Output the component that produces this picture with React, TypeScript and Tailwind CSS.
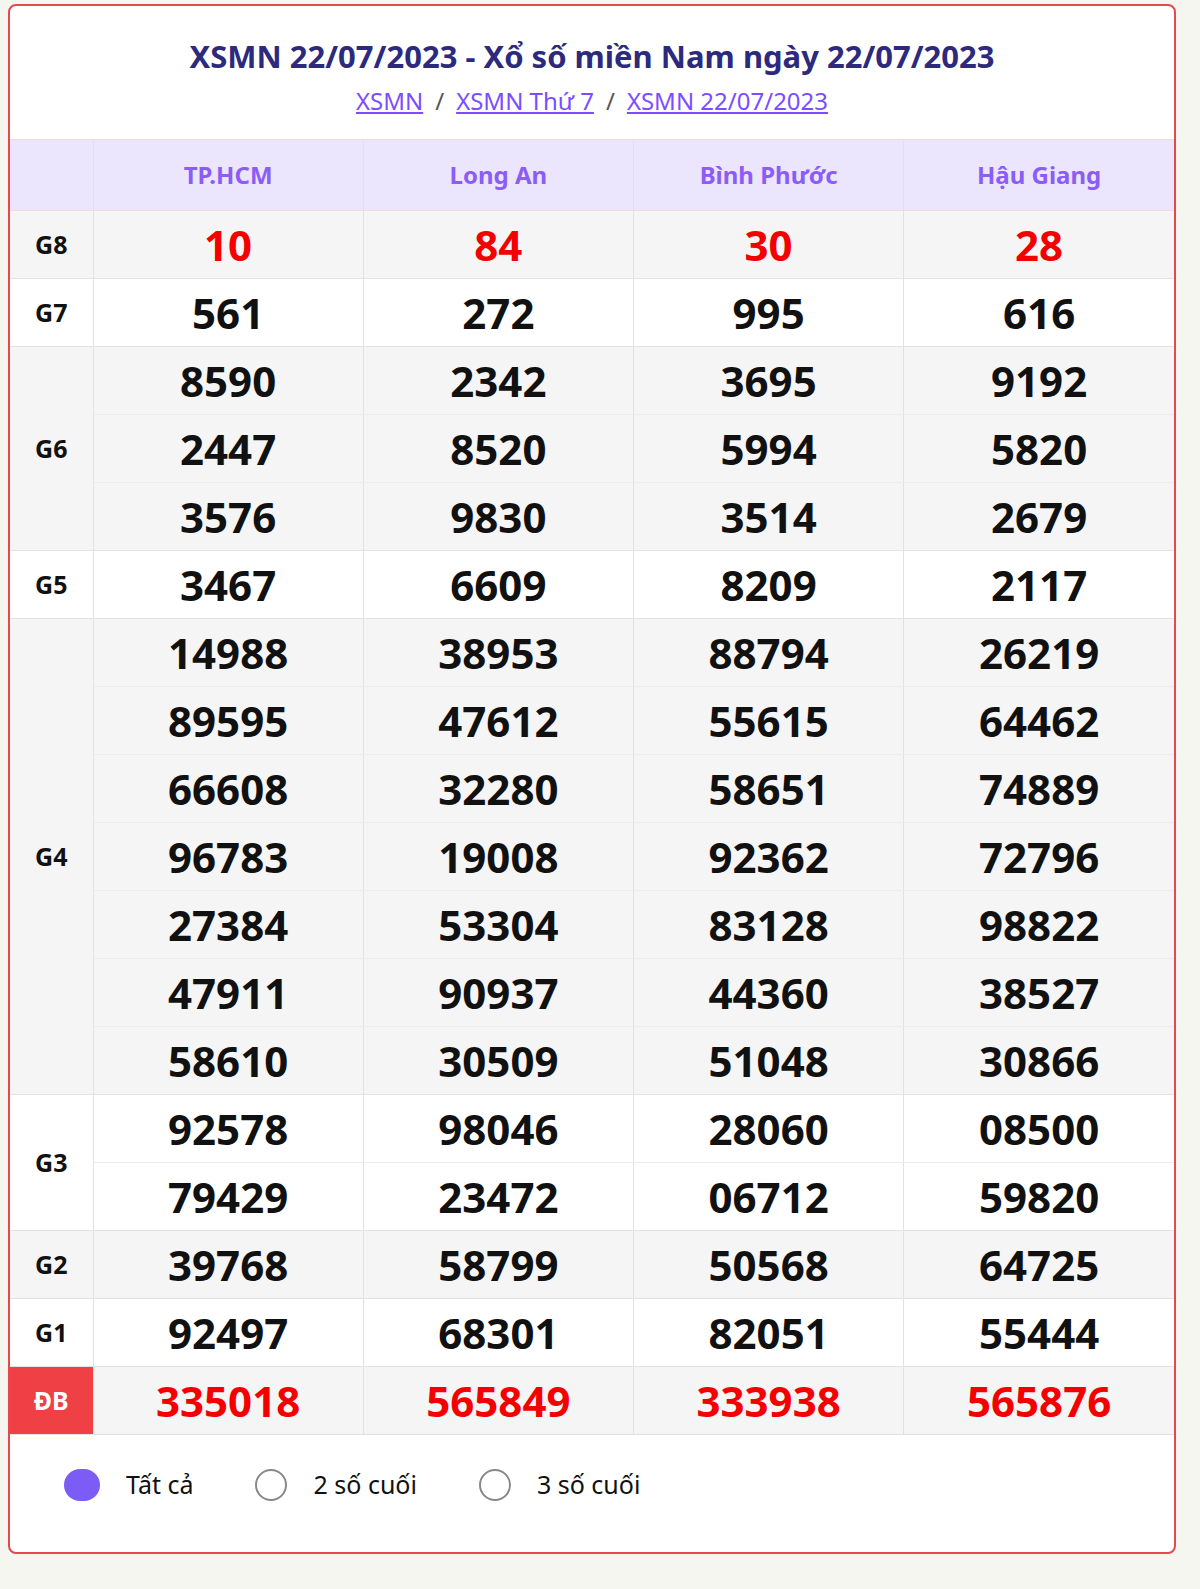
import React from "react";

const cols = ["TP.HCM", "Long An", "Bình Phước", "Hậu Giang"];
const groups: { g: string; rows: string[][]; bg: string; red?: boolean }[] = [
  { g: "G8", bg: "bg-[#f5f5f5]", red: true, rows: [["10", "84", "30", "28"]] },
  { g: "G7", bg: "bg-white", rows: [["561", "272", "995", "616"]] },
  { g: "G6", bg: "bg-[#f5f5f5]", rows: [["8590", "2342", "3695", "9192"], ["2447", "8520", "5994", "5820"], ["3576", "9830", "3514", "2679"]] },
  { g: "G5", bg: "bg-white", rows: [["3467", "6609", "8209", "2117"]] },
  { g: "G4", bg: "bg-[#f5f5f5]", rows: [
    ["14988", "38953", "88794", "26219"], ["89595", "47612", "55615", "64462"], ["66608", "32280", "58651", "74889"],
    ["96783", "19008", "92362", "72796"], ["27384", "53304", "83128", "98822"], ["47911", "90937", "44360", "38527"],
    ["58610", "30509", "51048", "30866"]] },
  { g: "G3", bg: "bg-white", rows: [["92578", "98046", "28060", "08500"], ["79429", "23472", "06712", "59820"]] },
  { g: "G2", bg: "bg-[#f5f5f5]", rows: [["39768", "58799", "50568", "64725"]] },
  { g: "G1", bg: "bg-white", rows: [["92497", "68301", "82051", "55444"]] },
  { g: "ĐB", bg: "bg-[#f5f5f5]", red: true, rows: [["335018", "565849", "333938", "565876"]] },
];

export default function App() {
  return (
    <div className="h-[1589px] w-[1200px] overflow-hidden box-border bg-[#f6f6f1] pt-[4px] px-[8px] font-[family-name:'Liberation_Sans',Arial,sans-serif]">
      <div className="w-[1168px] h-[1550px] bg-white border-2 border-[#e5484d] rounded-[8px] overflow-hidden">
        <div className="h-[133px] flex flex-col items-center pt-[30px]">
          <h1 className="text-[31px] font-bold text-[#2d2a7e] leading-[40px]">XSMN 22/07/2023 - Xổ số miền Nam ngày 22/07/2023</h1>
          <div className="mt-[10px] text-[24px] text-[#7c4dff] flex gap-[12px] leading-[30px]">
            <span className="underline">XSMN </span><span className="text-[#555]">/</span>
            <span className="underline">XSMN Thứ 7 </span><span className="text-[#555]">/</span>
            <span className="underline">XSMN 22/07/2023</span>
          </div>
        </div>
        <table className="w-full border-collapse table-fixed">
          <colgroup>
            <col className="w-[83px]" /><col /><col /><col /><col />
          </colgroup>
          <thead>
            <tr className="bg-[#ebe5fd] h-[71px]">
              <th className="border border-[#f3dcd8] border-l-0"></th>
              {cols.map((c) => (
                <th key={c} className="border border-[#f3dcd8] text-[24px] font-bold text-[#8b5cf6] last:border-r-0">{c}</th>
              ))}
            </tr>
          </thead>
          <tbody>
            {groups.map((gr) =>
              gr.rows.map((r, i) => (
                <tr key={gr.g + i} className={`${gr.bg} h-[68px]`}>
                  {i === 0 && (
                    <td rowSpan={gr.rows.length}
                      className={`border border-[#e2e2e6] border-l-0 text-center text-[25px] font-bold ${gr.g === "ĐB" ? "bg-[#ef4045] text-white" : "text-[#111]"}`}>
                      {gr.g}
                    </td>
                  )}
                  {r.map((n, j) => (
                    <td key={j}
                      className={`h-[68px] border-x border-[#e2e2e6] last:border-r-0 text-center font-bold text-[42px] leading-none ${gr.red ? "text-[#f50000]" : "text-[#111]"} ${i === gr.rows.length - 1 ? "border-b border-b-[#e2e2e6]" : "border-b border-b-[#ececee]"} ${i === 0 ? "border-t border-t-[#e2e2e6]" : ""}`}>
                      {n}
                    </td>
                  ))}
                </tr>
              ))
            )}
          </tbody>
        </table>
        <div className="flex items-center h-[100px] pl-[54px] text-[25px] text-[#111]">
          <span className="w-[36px] h-[32px] rounded-full bg-[#7b5cf5]" />
          <span className="ml-[26px]">Tất cả</span>
          <span className="ml-[62px] w-[32px] h-[32px] rounded-full border-2 border-[#888]" />
          <span className="ml-[26px]">2 số cuối</span>
          <span className="ml-[62px] w-[32px] h-[32px] rounded-full border-2 border-[#888]" />
          <span className="ml-[26px]">3 số cuối</span>
        </div>
      </div>
    </div>
  );
}
